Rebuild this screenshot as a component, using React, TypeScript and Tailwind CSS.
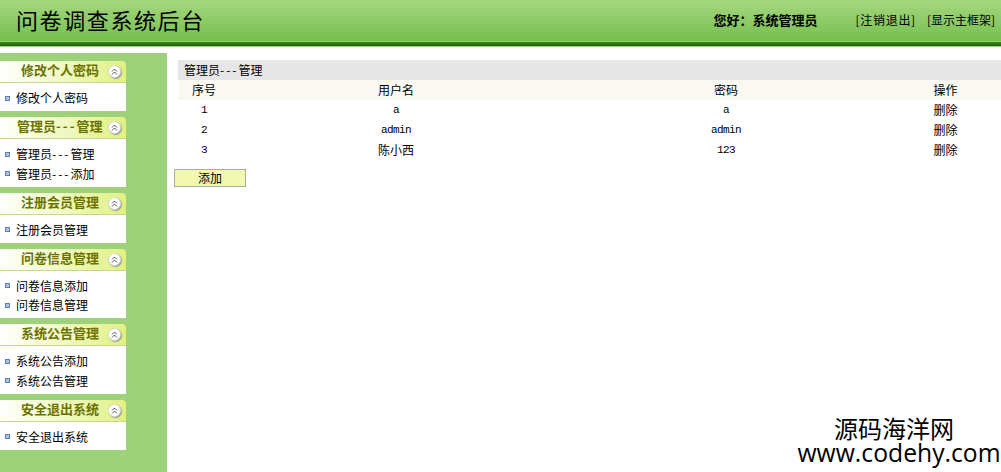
const cn = { fontFamily: '"Noto Sans CJK SC", sans-serif' };

const menus = [
  { title: "修改个人密码", items: ["修改个人密码"], pad: "pl-[21px]" },
  { title: "管理员---管理", items: ["管理员---管理", "管理员---添加"], pad: "pl-[17px]" },
  { title: "注册会员管理", items: ["注册会员管理"], pad: "pl-[21px]" },
  { title: "问卷信息管理", items: ["问卷信息添加", "问卷信息管理"], pad: "pl-[21px]" },
  { title: "系统公告管理", items: ["系统公告添加", "系统公告管理"], pad: "pl-[21px]" },
  { title: "安全退出系统", items: ["安全退出系统"], pad: "pl-[21px]" },
];

const rows = [
  ["1", "a", "a"],
  ["2", "admin", "admin"],
  ["3", "陈小西", "123"],
];

const isLatin = (s: string) => /^[a-z0-9]+$/.test(s);

// the dashes are half-width in the original font, a bit narrow here
function Dashed({ text }: { text: string }) {
  const parts = text.split("---");
  if (parts.length < 2) return <>{text}</>;
  return (
    <>
      {parts[0]}
      <span className="tracking-[2px]">---</span>
      {parts[1]}
    </>
  );
}

function Chevrons() {
  return (
    <span className="flex h-[13px] w-[13px] shrink-0 items-center justify-center rounded-full border border-[#d8d8d8] bg-white shadow-[1px_1px_1px_#9a9a9a]">
      <svg width="7" height="7" viewBox="0 0 7 7" fill="none" stroke="#555" strokeWidth="1">
        <path d="M1 3.5 L3.5 1 L6 3.5" />
        <path d="M1 6.5 L3.5 4 L6 6.5" />
      </svg>
    </span>
  );
}

function Menu({ title, items, pad }: { title: string; items: string[]; pad: string }) {
  return (
    <div className="mb-[6px] w-[126px]">
      <div className={`flex h-[22px] items-center justify-between rounded-tr-[4px] border-b border-[#c9d78a] bg-gradient-to-r from-white to-[#e2f07f] pr-[5px] ${pad}`}>
        <span className="mb-[3px] text-[13px] font-bold text-[#6b7300]">
          <Dashed text={title} />
        </span>
        <Chevrons />
      </div>
      <ul className="bg-white pt-[5.5px] pb-[3px]">
        {items.map((item) => (
          <li key={item} className="flex h-[19.5px] items-center text-[12px] text-black">
            <span className="ml-[5px] mr-[6px] h-[5px] w-[5px] border border-[#5f7fa8] bg-[#a9c4ea]" />
            <span>
              <Dashed text={item} />
            </span>
          </li>
        ))}
      </ul>
    </div>
  );
}

export default function App() {
  return (
    <div className="relative h-[472px] w-[1001px] overflow-hidden bg-white" style={cn}>
      <header className="h-[47px]">
        <div className="flex h-[41px] items-center bg-gradient-to-b from-[#a6d77e] to-[#74bf4e] pb-[2px] pl-[16px]">
          <h1 className="text-[22px] font-normal tracking-[1.6px] text-black">问卷调查系统后台</h1>
          <span className="ml-auto text-[13px] font-bold text-black">您好：系统管理员</span>
          <span className="ml-[38px] text-[12px] tracking-[0.7px] text-black">[注销退出]</span>
          <span className="ml-[11px] mr-[6px] text-[12px] text-black">[显示主框架]</span>
        </div>
        <div className="h-[1px] bg-[#8ed05f]" />
        <div className="h-[4px] bg-gradient-to-b from-[#3f8a1c] to-[#1f5c0c]" />
        <div className="h-[1px] bg-[#9ed574]" />
      </header>

      <div className="mt-[6px] flex h-[419px]">
        <aside className="h-full w-[167px] shrink-0 bg-[#9dd27a] pt-[8px]">
          {menus.map((m) => (
            <Menu key={m.title} {...m} />
          ))}
        </aside>

        <main className="flex-1 pt-[7px] pl-[11px] text-[12px] text-black">
          <div className="flex h-[20px] items-center bg-[#e6e6e6] pl-[6px]">
            <span>
              <Dashed text="管理员---管理" />
            </span>
          </div>
          <div className="grid h-[20px] grid-cols-[52px_332px_328px_1fr] items-center bg-[#f9f9f1] text-center">
            <span>序号</span>
            <span>用户名</span>
            <span>密码</span>
            <span>操作</span>
          </div>
          {rows.map((r) => (
            <div key={r[0]} className="grid h-[20px] grid-cols-[52px_332px_328px_1fr] items-center text-center">
              {r.map((c, i) =>
                isLatin(c) ? (
                  <span key={i} className="font-['Liberation_Mono'] text-[11px] tracking-[-0.6px]">
                    {c}
                  </span>
                ) : (
                  <span key={i}>{c}</span>
                ),
              )}
              <span>删除</span>
            </div>
          ))}
          <button className="mt-[9px] -ml-[4px] h-[18px] w-[72px] border border-[#aaaaaa] bg-[#f3f8b0] pb-[1px] text-[12px] leading-none text-black">
            添加
          </button>
        </main>
      </div>

      <div className="absolute right-0 bottom-[7px] w-[204px] text-center text-black">
        <div className="pr-[10px] text-[24px] leading-[25px]">源码海洋网</div>
        <div className="font-['Open_Sans'] text-[24.7px] leading-[25px] whitespace-nowrap">www.codehy.com</div>
      </div>
    </div>
  );
}
